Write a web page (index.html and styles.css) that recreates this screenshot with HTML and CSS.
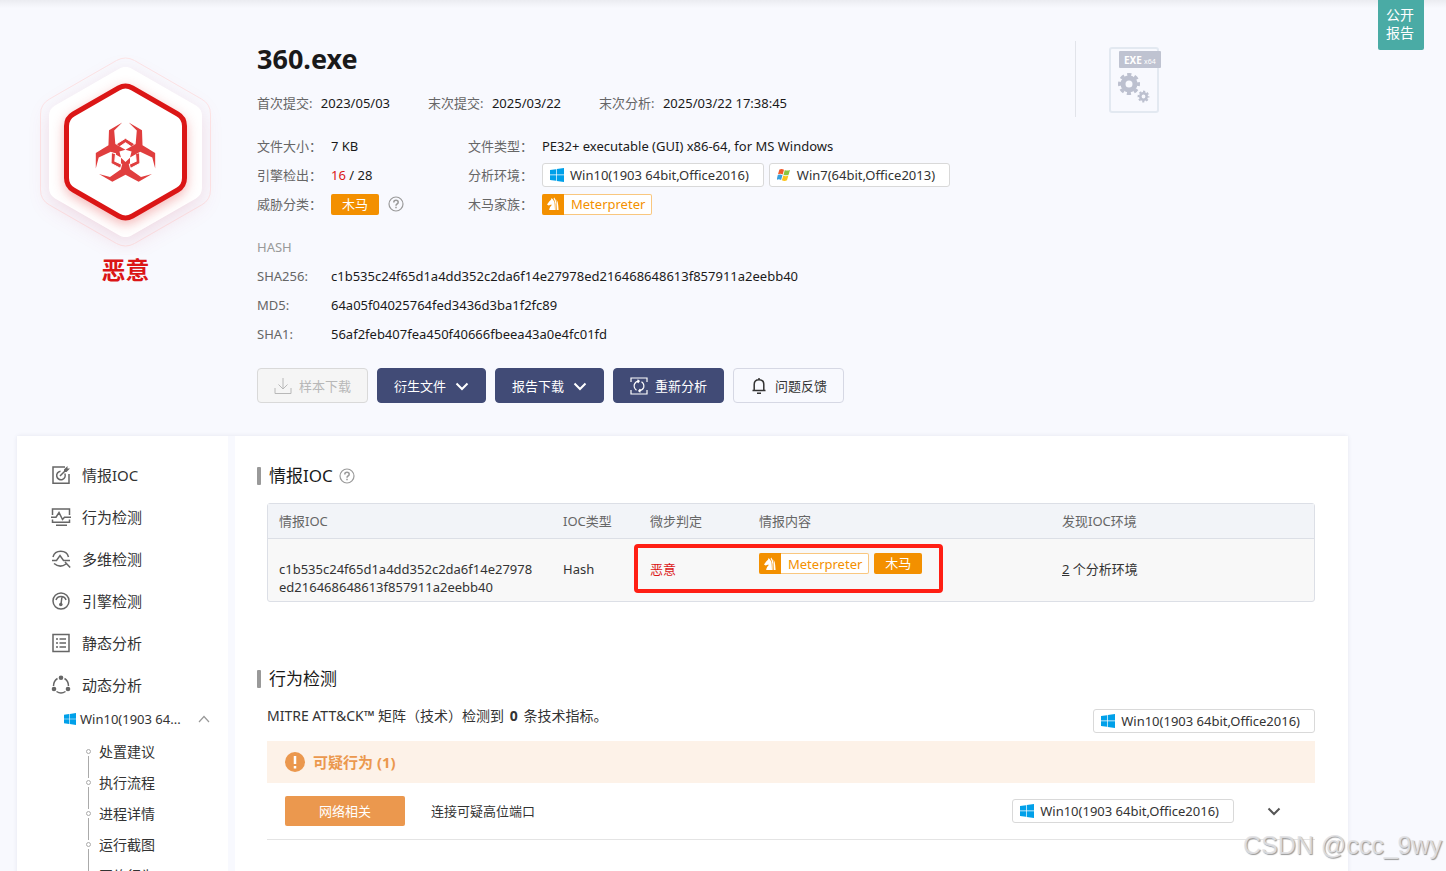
FILE: index.html
```html
<!DOCTYPE html>

<html lang="zh-CN">

<head>

<meta http-equiv="Content-Type" content="text/html; charset=utf-8" />
<title>360.exe</title>

<link rel="stylesheet" href="styles.css">

</head>

<body>

<!-- Shared icons -->
<svg class="Hidden" aria-hidden="true">
    <symbol id="Win10" viewBox="0 0 14 14">
        <path fill="#00a0e9" d="M0 2 6 1.2V6.6H0ZM6.7 1.1 14 0V6.6H6.7ZM0 7.3H6V12.8L0 12ZM6.7 7.3H14V14L6.7 12.9Z" />
    </symbol>
    <symbol id="Win7" viewBox="0 0 14 14">
        <path fill="#f1592a" d="M2.4 1.6Q4.6.4 7 1.7L5.7 6.4Q3.5 5.2 1 6.3Z" />
        <path fill="#8bc53f" d="M7.8 2.1Q10.2 3.2 13 1.9L11.6 6.7Q9 7.9 6.5 6.8Z" />
        <path fill="#3aa0dc" d="M.8 7.1Q3.2 6 5.5 7.3L4.1 12Q1.9 10.8-.4 11.8Z" />
        <path fill="#fcc419" d="M6.3 7.6Q8.7 8.9 11.4 7.6L10 12.3Q7.5 13.5 4.9 12.3Z" />
    </symbol>
    <symbol id="Horse" viewBox="0 0 14 14">
        <path fill="#fff" d="M5.6 1 7 2.4Q8.6 4 8.7 7.4L9 13H4.2L3 12.8Q3.4 10 5.6 8.2L5.4 7.4 2.6 8.6 1 7.6 3.4 4.2 5 2.8ZM8.2.6Q10 2.6 10.3 6V13H9.4V7Q9.2 4 7.6 1.8ZM10.6 2.6Q12 5 12.2 8L12.6 13H11Z" />
    </symbol>
    <symbol id="Help" viewBox="0 0 16 16">
        <circle cx="8" cy="8" r="7" fill="none" stroke="#9a9a9a" stroke-width="1.2" />
        <path d="M5.8 6.4Q5.8 4.3 8 4.3T10.2 6.3Q10.2 7.4 9 8 8 8.5 8 9.7M8 10.8V12.2" fill="none" stroke="#9a9a9a" stroke-width="1.5" />
    </symbol>
    <symbol id="Down" viewBox="0 0 14 14">
        <path d="M1.5 4.5 7 10 12.5 4.5" fill="none" stroke="currentColor" stroke-width="2" />
    </symbol>
</svg>

<div class="Page">

    <div class="PublicFlag">公开<br />报告</div>

    <div class="Header">
        <div class="Verdict">
            <svg class="VerdictIcon" viewBox="0 0 200 210">
                <path class="HexOuter" d="M91.5 15.5Q100.5 10.5 109.5 15.5L176.5 54Q185.500 59 185.500 69V145Q185.500 155 176.500 160L109.500 198.500Q100.500 203.500 91.500 198.500L24.500 160Q15.500 155 15.500 145V69Q15.500 59 24.500 54Z" />
                <path class="HexWhite" d="M100.500 34 165 71V143L100.500 180 36 143V71Z" />
                <path class="HexRed" d="M93.600 43Q100.500 39 107.400 43L152.600 69Q159.500 73 159.500 81V133Q159.500 141 152.600 145L107.400 171Q100.500 175 93.600 171L48.400 145Q41.500 141 41.500 133V81Q41.500 73 48.400 69Z" />
                <g transform="translate(5 -5) scale(.3333)" fill="#e03e3e">
                    <g id="Claw">
                        <path d="M207 402 240 411 273 388V353L286.500 366 300 353V388L333 411 366 402 326 425 286.500 404 247 425Z" />
                        <path d="M259 312 286.500 295 314 312 305 321 286.500 308 268 321Z" stroke="#fff" stroke-width="3" />
                    </g>
                    <use href="#Claw" transform="rotate(120 286.500 345)" />
                    <use href="#Claw" transform="rotate(240 286.500 345)" />
                </g>
            </svg>
            <div class="VerdictText">恶意</div>
        </div>

        <div class="Info">
            <h1 class="FileName">360.exe</h1>
            <div class="Dates">
                <div class="DateItem"><span class="Label">首次提交:</span> 2023/05/03</div>
                <div class="DateItem"><span class="Label">末次提交:</span> 2025/03/22</div>
                <div class="DateItem"><span class="Label">末次分析:</span> 2025/03/22 17:38:45</div>
            </div>
            <div class="Facts">
                <span class="Label">文件大小：</span>
                <span>7 KB</span>
                <span class="Label">文件类型：</span>
                <span>PE32+ executable (GUI) x86-64, for MS Windows</span>

                <span class="Label">引擎检出：</span>
                <span><span class="Red">16</span> / 28</span>
                <span class="Label">分析环境：</span>
                <span class="Tags">
                    <span class="Env"><svg class="EnvIcon"><use href="#Win10" /></svg>Win10(1903 64bit,Office2016)</span>
                    <span class="Env"><svg class="EnvIcon"><use href="#Win7" /></svg>Win7(64bit,Office2013)</span>
                </span>

                <span class="Label">威胁分类：</span>
                <span class="Tags">
                    <span class="Trojan">木马</span>
                    <svg class="HelpIcon HelpGap"><use href="#Help" /></svg>
                </span>
                <span class="Label">木马家族：</span>
                <span class="Tags">
                    <span class="Family"><span class="FamilyIcon"><svg class="EnvIcon"><use href="#Horse" /></svg></span>Meterpreter</span>
                </span>
            </div>
            <div class="Hashes">
                <span class="HashTitle">HASH</span>
                <span class="Label">SHA256:</span>
                <span>c1b535c24f65d1a4dd352c2da6f14e27978ed216468648613f857911a2eebb40</span>
                <span class="Label">MD5:</span>
                <span>64a05f04025764fed3436d3ba1f2fc89</span>
                <span class="Label">SHA1:</span>
                <span>56af2feb407fea450f40666fbeea43a0e4fc01fd</span>
            </div>
            <div class="Actions">
                <button class="Button ButtonDisabled" type="button" disabled>
                    <svg class="ButtonIcon" viewBox="0 0 18 18"><path d="M9 1V12M4.500 7.500 9 12 13.500 7.500M1 11V16.500H17V11" fill="none" stroke="currentColor" /></svg>样本下载
                </button>
                <button class="Button ButtonDark" type="button">衍生文件<svg class="ChevronIcon"><use href="#Down" /></svg></button>
                <button class="Button ButtonDark" type="button">报告下载<svg class="ChevronIcon"><use href="#Down" /></svg></button>
                <button class="Button ButtonDark" type="button">
                    <svg class="ButtonIcon" viewBox="0 0 18 18"><path d="M1 5V1H17V5M17 13V17H1V13M6.500 13.200Q3.500 11 4.300 7.500 5.500 4.500 9 4.200M7.500 2.800 9.200 4.200 7.800 6M11.500 4.800Q14.500 7 13.700 10.500 12.500 13.500 9 13.800M10.500 15.200 8.800 13.800 10.200 12" fill="none" stroke="currentColor" stroke-width="1.200" /></svg>重新分析
                </button>
                <button class="Button ButtonLight" type="button">
                    <svg class="ButtonIcon" viewBox="0 0 18 18"><path d="M2.500 13.500H15.500M4.200 13.500V7.500Q4.200 2.700 9 2.700T13.800 7.500V13.500M9 2.700V1M7 16.300H11" fill="none" stroke="currentColor" stroke-width="1.500" /></svg>问题反馈
                </button>
            </div>
        </div>

        <div class="FileKind">
            <svg class="FileKindIcon" viewBox="0 0 54 68">
                <rect x="2" y="2" width="48" height="64" rx="2" fill="none" stroke="#e3e9f1" stroke-width="2" />
                <rect x="11" y="5" width="42" height="17" rx="1" fill="#bfc3d1" />
                <text x="16" y="18" class="KindText">EXE</text>
                <text x="36" y="18" class="KindBit">x64</text>
                <g fill="none" stroke="#bcc0cf">
                    <circle cx="21" cy="38" r="6" stroke-width="5" />
                    <circle cx="21" cy="38" r="9.500" stroke-width="3" stroke-dasharray="4.200 3.260" stroke-dashoffset="2.100" />
                    <circle cx="35.500" cy="50.500" r="3.200" stroke-width="2.600" />
                    <circle cx="35.500" cy="50.500" r="5" stroke-width="1.800" stroke-dasharray="2.200 1.727" stroke-dashoffset="1.100" />
                </g>
            </svg>
        </div>
    </div>

    <div class="Body">
        <nav class="Side">
            <a class="SideItem" href="#ioc">
                <svg class="SideIcon" viewBox="0 0 20 20"><path d="M14 2H2V18.200H18V9M13.800 8.500A4.300 4.300 0 1 1 9.500 6.200M9 11 14 6" /><path class="Fill" d="M13 4.500 16.500 1V3.500H19L15.500 7H13Z" /></svg>情报IOC
            </a>
            <a class="SideItem" href="#behavior">
                <svg class="SideIcon" viewBox="0 0 20 20"><path d="M1.500 8V2H18.500V8M1.500 12.500V15.200H18.500V12.500M0 10.200H5L8 5.500 11.500 12.500 13.500 10.200H20M5 18.300H16" /></svg>行为检测
            </a>
            <a class="SideItem" href="#multi">
                <svg class="SideIcon" viewBox="0 0 20 20"><path d="M2 8A8 7.500 0 0 1 17.500 8M3 14.500Q9 19.500 15 15M14 13 19.200 18.500M1 11.500H5.500L9 6.500 12.500 11.500H19" /></svg>多维检测
            </a>
            <a class="SideItem" href="#engine">
                <svg class="SideIcon" viewBox="0 0 20 20"><circle cx="10" cy="10" r="8" /><path d="M5 9Q6 5.500 10 5.500T15 9M11 5.500 10 13" /><circle class="Fill" cx="9.800" cy="13.500" r="1.800" /></svg>引擎检测
            </a>
            <a class="SideItem" href="#static">
                <svg class="SideIcon" viewBox="0 0 20 20"><path d="M2 1.500H18V18.500H2ZM5 6H7M8.500 6H15M5 10H7M8.500 10H15M5 14H7M8.500 14H15" /></svg>静态分析
            </a>
            <a class="SideItem" href="#dynamic">
                <svg class="SideIcon" viewBox="0 0 20 20"><path d="M6.500 3.500Q2.500 6 2.500 11M13.500 3.500Q17.500 6 17.500 11M5.500 16.500Q10 19.500 14.500 16.500" /><circle class="Fill" cx="10" cy="2.800" r="2.300" /><circle class="Fill" cx="3" cy="14" r="2.300" /><circle class="Fill" cx="17" cy="14" r="2.300" /></svg>动态分析
            </a>
            <a class="SideEnv" href="#win10">
                <svg class="SideEnvIcon"><use href="#Win10" /></svg><span class="SideEnvName">Win10(1903 64...</span>
                <svg class="SideUp" viewBox="0 0 12 12"><path d="M1 9 6 3.500 11 9" fill="none" stroke="#999" stroke-width="1.200" /></svg>
            </a>
            <ul class="Steps">
                <li><a href="#advice">处置建议</a></li>
                <li><a href="#flow">执行流程</a></li>
                <li><a href="#process">进程详情</a></li>
                <li><a href="#shots">运行截图</a></li>
                <li><a href="#network">网络行为</a></li>
            </ul>
        </nav>

        <div class="Main">
            <h2 class="Heading" id="ioc">情报IOC<svg class="HelpIcon"><use href="#Help" /></svg></h2>
            <div class="TableWrap">
                <table class="IocTable">
                    <colgroup>
                        <col class="ColHash"><col class="ColType"><col class="ColJudge"><col class="ColContent"><col>
                    </colgroup>
                    <thead>
                        <tr>
                            <th>情报IOC</th>
                            <th>IOC类型</th>
                            <th>微步判定</th>
                            <th>情报内容</th>
                            <th>发现IOC环境</th>
                        </tr>
                    </thead>
                    <tbody>
                        <tr>
                            <td>c1b535c24f65d1a4dd352c2da6f14e27978ed216468648613f857911a2eebb40</td>
                            <td>Hash</td>
                            <td class="Red">恶意</td>
                            <td class="TagCell">
                                <div class="Tags">
                                    <span class="Family"><span class="FamilyIcon"><svg class="EnvIcon"><use href="#Horse" /></svg></span>Meterpreter</span>
                                    <span class="Trojan">木马</span>
                                </div>
                            </td>
                            <td><u>2</u> 个分析环境</td>
                        </tr>
                    </tbody>
                </table>
                <div class="Mark"></div>
            </div>

            <h2 class="Heading" id="behavior">行为检测</h2>
            <div class="Summary">
                <span>MITRE ATT&amp;CK™ 矩阵（技术）检测到 <strong>0</strong> 条技术指标。</span>
                <span class="Env SummaryEnv"><svg class="EnvIcon"><use href="#Win10" /></svg>Win10(1903 64bit,Office2016)</span>
            </div>
            <div class="Banner">
                <svg class="BannerIcon" viewBox="0 0 20 20"><circle cx="10" cy="10" r="10" fill="#eb984e" /><path d="M10 4V12M10 14V16.500" stroke="#fff" stroke-width="2.500" /></svg>可疑行为 (1)
            </div>
            <div class="Finding">
                <span class="FindingType">网络相关</span>
                <span class="FindingText">连接可疑高位端口</span>
                <span class="Env"><svg class="EnvIcon"><use href="#Win10" /></svg>Win10(1903 64bit,Office2016)</span>
                <button class="Expand" type="button" aria-label="展开"><svg class="ChevronIcon"><use href="#Down" /></svg></button>
            </div>
        </div>
    </div>

    <div class="Watermark">CSDN @ccc_9wy</div>

</div>

</body>
</html>
```
FILE: styles.css
```css
	html, body {
		height: 100%;
		margin: 0;
	}
	body {
		font-family: "Noto Sans", "Noto Sans CJK SC", sans-serif;
		font-size: 13px;
		line-height: 24px;
		color: #1a1a1a;
		background: #f8f9fe;
	}
	a {
		color: inherit;
		text-decoration: none;
	}
	.Hidden {
		position: absolute;
		width: 0;
		height: 0;
	}
	.Page {
		position: relative;
		box-sizing: border-box;
		height: 100vh;
		padding: 0 98px 0 17px;
		overflow: hidden;
		background: linear-gradient(#ebecf1, #f8f9fe 8px);
	}
	.PublicFlag {
		position: absolute;
		top: 0;
		right: 22px;
		padding: 6px 10px 8px 8px;
		border-radius: 0 0 2px 2px;
		background: #4aaba5;
		color: #fff;
		font-size: 14px;
		line-height: 18px;
	}

	/* File summary */
	.Header {
		display: flex;
		padding-top: 41px;
	}
	.Verdict {
		width: 217px;
		margin-right: 23px;
		text-align: center;
	}
	.VerdictIcon {
		display: block;
		width: 200px;
		height: 210px;
		margin: 4px 8px 0;
	}
	.HexOuter {
		fill: none;
		stroke: #fde5e6;
	}
	.HexWhite {
		fill: #fff;
		stroke: #fff;
		stroke-width: 24px;
		stroke-linejoin: round;
		filter: drop-shadow(0 6px 10px rgba(200, 40, 80, .14));
	}
	.HexRed {
		fill: #fff;
		stroke: #db1616;
		stroke-width: 5px;
		filter: drop-shadow(0 4px 6px rgba(219, 22, 22, .3));
	}
	.VerdictText {
		color: #db1616;
		font-size: 24px;
		font-weight: bold;
		line-height: 30px;
	}
	.Info {
		flex: 1;
	}
	.FileName {
		margin: 0 0 14px;
		font-size: 27px;
		line-height: 36px;
	}
	.Dates {
		display: flex;
		gap: 38px;
		margin-bottom: 19px;
	}
	.Label {
		color: #666;
	}
	.DateItem .Label {
		margin-right: 5px;
	}
	.Facts {
		display: grid;
		grid-template-columns: 74px 137px 74px 1fr;
		row-gap: 5px;
		margin-bottom: 19px;
	}
	.Hashes {
		display: grid;
		grid-template-columns: 74px 1fr;
		row-gap: 5px;
		margin-bottom: 22px;
	}
	.HashTitle {
		grid-column: 1 / 3;
		color: #999;
	}
	.Red {
		color: #db1616;
	}
	.Tags {
		display: flex;
		align-items: center;
		gap: 5px;
	}
	.Env {
		display: flex;
		align-items: center;
		box-sizing: border-box;
		height: 24px;
		padding: 0 14px 0 7px;
		border: 1px solid #d9d9d9;
		border-radius: 3px;
		background: #fff;
		color: #333;
		white-space: nowrap;
	}
	.EnvIcon {
		width: 14px;
		height: 14px;
	}
	.Env .EnvIcon {
		margin-right: 6px;
	}
	.Trojan {
		padding: 0 11px;
		border-radius: 2px;
		background: #f39000;
		color: #fff;
		line-height: 21px;
	}
	.Family {
		display: flex;
		align-items: center;
		box-sizing: border-box;
		height: 21px;
		padding-right: 6px;
		border: 1px solid #f9c77f;
		border-left: 0;
		border-radius: 2px;
		background: #fff;
		color: #f39000;
	}
	.FamilyIcon {
		display: flex;
		align-items: center;
		justify-content: center;
		width: 22px;
		height: 21px;
		margin-right: 7px;
		border-radius: 2px 0 0 2px;
		background: #f39000;
	}
	.HelpIcon {
		width: 16px;
		height: 16px;
	}
	.HelpGap {
		margin-left: 4px;
	}
	.Actions {
		display: flex;
		gap: 9px;
	}
	.Button {
		display: flex;
		align-items: center;
		height: 35px;
		padding: 0 16px;
		border: 1px solid #414b76;
		border-radius: 4px;
		font: inherit;
	}
	.ButtonDark {
		background: #414b76;
		color: #fff;
	}
	.ButtonLight {
		border-color: #d6d8e4;
		background: #f8f9fe;
		color: #333;
	}
	.ButtonDisabled {
		border-color: #d9d9d9;
		background: #f5f5f5;
		color: #b8b8b8;
	}
	.ButtonIcon {
		width: 18px;
		height: 18px;
		margin-right: 7px;
	}
	.ChevronIcon {
		width: 14px;
		height: 14px;
	}
	.Button .ChevronIcon {
		margin-left: 9px;
	}
	.FileKind {
		box-sizing: border-box;
		width: 273px;
		height: 76px;
		padding: 5px 0 0 32px;
		border-left: 1px solid #e2e4ea;
	}
	.FileKindIcon {
		width: 54px;
		height: 68px;
	}
	.KindText {
		fill: #fff;
		font-size: 10px;
		font-weight: bold;
	}
	.KindBit {
		fill: #fff;
		font-size: 7px;
	}

	/* Side menu and report */
	.Body {
		display: flex;
		gap: 7px;
		min-height: 480px;
		margin-top: 33px;
		box-shadow: 0 0 4px rgba(60, 70, 120, .1);
	}
	.Side {
		box-sizing: border-box;
		width: 211px;
		padding: 18px 18px 0 34px;
		background: #fff;
		color: #333;
	}
	.SideItem {
		display: flex;
		align-items: center;
		gap: 11px;
		height: 42px;
		font-size: 15px;
	}
	.SideIcon {
		width: 20px;
		height: 20px;
		fill: none;
		stroke: #666;
		stroke-width: 1.5px;
	}
	.SideIcon .Fill {
		fill: #666;
		stroke: none;
	}
	.SideEnv {
		display: flex;
		align-items: center;
		height: 26px;
		padding-left: 13px;
	}
	.SideEnvIcon {
		flex: none;
		width: 12px;
		height: 12px;
		margin-right: 4px;
	}
	.SideEnvName {
		flex: 1;
		white-space: nowrap;
	}
	.SideUp {
		flex: none;
		width: 12px;
		height: 12px;
	}
	.Steps {
		margin: 4px 0 0 35px;
		padding: 0;
		list-style: none;
		font-size: 14px;
	}
	.Steps li {
		position: relative;
		height: 31px;
		padding-left: 13px;
		line-height: 31px;
	}
	.Steps li::before {
		content: "";
		position: absolute;
		top: 13px;
		left: 0;
		width: 3px;
		height: 3px;
		border: 1px solid #aaa;
		border-radius: 50%;
	}
	.Steps li::after {
		content: "";
		position: absolute;
		top: 20px;
		left: 2px;
		width: 1px;
		height: 22px;
		background: #aaa;
	}
	.Main {
		flex: 1;
		min-width: 0;
		padding: 28px 33px 0 32px;
		background: #fff;
	}
	.Heading {
		display: flex;
		align-items: center;
		gap: 6px;
		margin: 0 0 15px -10px;
		font-size: 17px;
		font-weight: normal;
	}
	.Heading::before {
		content: "";
		width: 4px;
		height: 18px;
		margin-right: 2px;
		border-radius: 1px;
		background: #999;
	}
	.TableWrap {
		position: relative;
		margin-bottom: 65px;
	}
	.IocTable {
		width: 100%;
		border: 1px solid #dcdfe6;
		border-radius: 3px;
		border-spacing: 0;
		table-layout: fixed;
		background: #f8f8f8;
		color: #333;
	}
	.ColHash {
		width: 284px;
	}
	.ColType {
		width: 87px;
	}
	.ColJudge {
		width: 109px;
	}
	.ColContent {
		width: 303px;
	}
	.IocTable th {
		height: 34px;
		padding: 0 0 0 11px;
		border-bottom: 1px solid #dcdfe6;
		background: #f2f4f8;
		color: #666;
		font-weight: normal;
		text-align: left;
	}
	.IocTable td {
		padding: 21px 16px 5px 11px;
		line-height: 18px;
		vertical-align: top;
		word-break: break-all;
	}
	.IocTable .Red {
		color: #db1616;
	}
	.IocTable .TagCell {
		padding-top: 14px;
	}
	/* Highlight round the verdict and its tags */
	.Mark {
		position: absolute;
		top: 41px;
		left: 367px;
		box-sizing: border-box;
		width: 309px;
		height: 49px;
		border: 4px solid #ff1f14;
		border-radius: 4px;
	}
	.Summary {
		display: flex;
		justify-content: space-between;
		margin: -2px 0 8px;
		color: #333;
		font-size: 14px;
	}
	.Summary strong {
		margin: 0 2px;
	}
	.SummaryEnv {
		margin-top: 5px;
		font-size: 13px;
	}
	.Banner {
		display: flex;
		align-items: center;
		gap: 8px;
		height: 42px;
		padding-left: 18px;
		background: #fdf2e8;
		color: #eb984e;
		font-size: 15px;
		font-weight: bold;
	}
	.BannerIcon {
		width: 20px;
		height: 20px;
	}
	.Finding {
		display: flex;
		align-items: center;
		height: 56px;
		padding: 0 34px 0 18px;
		border-bottom: 1px solid #e4e4e4;
		color: #333;
	}
	.FindingType {
		width: 120px;
		margin-right: 26px;
		border-radius: 2px;
		background: #eb984e;
		color: #fff;
		line-height: 30px;
		text-align: center;
	}
	.FindingText {
		flex: 1;
	}
	.Expand {
		display: flex;
		margin-left: 33px;
		padding: 0;
		border: 0;
		background: none;
		color: #555;
	}
	.Watermark {
		position: absolute;
		right: 4px;
		bottom: 8px;
		color: rgba(225, 225, 228, .9);
		font-family: "Liberation Sans", Arial, sans-serif;
		font-size: 25px;
		line-height: 36px;
		text-shadow: 1px 1px 1px #999;
	}
```
